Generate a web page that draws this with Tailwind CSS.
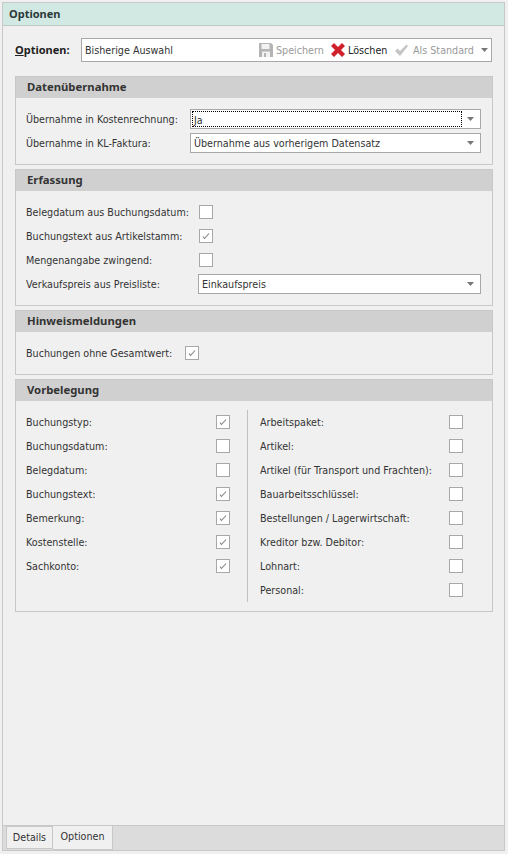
<!doctype html>
<html lang="de"><head><meta charset="utf-8"><script src="https://cdn.jsdelivr.net/npm/@tailwindcss/browser@4"></script></head>
<body class="w-[508px] h-[854px] bg-[#f0f0f0] overflow-hidden font-['DejaVu_Sans','Liberation_Sans',sans-serif] text-[9.6px] text-[#333] [&_span]:pt-[2px]">
<div class="w-[508px] h-[854px] pt-[2px] pl-[2px] pr-[3px] pb-[3px] bg-[#f0f0f0]">
<div class="h-full border border-[#c8c8c8] flex flex-col">
  <div class="h-[23px] bg-[#d2e8e2] border-b border-[#c0c8c6] flex items-center pl-[6px] font-bold text-[11px] text-[#2a3a3a] font-['Noto_Sans']">Optionen</div>
  <div class="flex-1 pl-[12px] pr-[11px] flex flex-col">
    <div class="flex items-center mt-[12px] h-[24px] pr-[1px]">
      <label class="w-[66px] font-bold text-[11px] text-[#222] font-['Noto_Sans']"><u>O</u>ptionen:</label>
      <div class="flex-1 h-[24px] bg-white border border-[#a8a8a8] flex items-center pl-[3px] pr-[3px] whitespace-nowrap">
        <span class="flex-1">Bisherige Auswahl</span>
        <svg class="w-[14px] h-[14px] mr-[3px]" viewBox="0 0 14 14"><path d="M0 0h12l2 2v12H0z" fill="#b4b4b4"/><rect x="2.500" y="1" width="8" height="5" fill="#f2f2f2"/><rect x="3" y="8.500" width="8" height="5.500" fill="#f2f2f2"/><rect x="5" y="10" width="2" height="4" fill="#b4b4b4"/></svg>
        <span class="w-[48px] text-[#9a9a9a] mr-[7px]">Speichern</span>
        <svg class="w-[14px] h-[14px] mr-[3px]" viewBox="0 0 14 14"><path d="M3 0l4 4 4-4 3 3-4 4 4 4-3 3-4-4-4 4-3-3 4-4-4-4z" fill="#d0202c"/></svg>
        <span class="w-[39px] text-[#222] mr-[7px]">Löschen</span>
        <svg class="w-[15px] h-[14px] mr-[4px]" viewBox="0 0 15 14"><path d="M1 8l2.500-2.500 2.500 2.500 6.500-6.500 1.500 1.500-8 10z" fill="#c4c4c4"/></svg>
        <span class="w-[61px] text-[#9a9a9a] mr-[7px]">Als Standard</span>
        <svg class="w-[7px] h-[4px]" viewBox="0 0 7 4"><path d="M0 0h7L3.500 4z" fill="#777"/></svg>
      </div>
    </div>

    <section class="mt-[14px] border border-[#c8c8c8]">
      <h2 class="h-[21px] bg-[#d0d0d0] flex items-center pl-[11px] font-bold text-[11.3px] text-[#333] font-['Noto_Sans']">Datenübernahme</h2>
      <div class="pt-[11px] pb-[11px] pl-[10px] pr-[11px] flex flex-col gap-[4px]">
        <div class="flex items-center h-[20px]"><span class="w-[164px]">Übernahme in Kostenrechnung:</span>
          <div class="flex-1 h-[20px] bg-white border border-[#a8a8a8] flex items-center p-[1px]"><span class="flex-1 h-full border border-dotted border-black pl-[1px] leading-[14px]">Ja</span><svg class="w-[7px] h-[4px] mx-[5px]" viewBox="0 0 7 4"><path d="M0 0h7L3.500 4z" fill="#777"/></svg></div></div>
        <div class="flex items-center h-[20px]"><span class="w-[164px]">Übernahme in KL-Faktura:</span>
          <div class="flex-1 h-[20px] bg-white border border-[#a8a8a8] flex items-center pl-[3px]"><span class="flex-1">Übernahme aus vorherigem Datensatz</span><svg class="w-[7px] h-[4px] mx-[6px]" viewBox="0 0 7 4"><path d="M0 0h7L3.500 4z" fill="#777"/></svg></div></div>
      </div>
    </section>

    <section class="mt-[4px] border border-[#c8c8c8]">
      <h2 class="h-[21px] bg-[#d0d0d0] flex items-center pl-[11px] font-bold text-[11.3px] text-[#333] font-['Noto_Sans']">Erfassung</h2>
      <div class="pt-[9px] pb-[9px] pl-[10px] pr-[11px]">
        <div class="flex items-center h-[24px]"><span class="w-[173px]">Belegdatum aus Buchungsdatum:</span><i class="w-[14px] h-[14px] bg-white border border-[#a8a8a8]"></i></div>
        <div class="flex items-center h-[24px]"><span class="w-[173px]">Buchungstext aus Artikelstamm:</span><i class="w-[14px] h-[14px] bg-white border border-[#a8a8a8] flex items-center justify-center"><svg class="w-[8px] h-[8px]" viewBox="0 0 8 8"><path d="M1 4.500l1.500 2L7 1.500" fill="none" stroke="#808080" stroke-width="1.100"/></svg></i></div>
        <div class="flex items-center h-[24px]"><span class="w-[173px]">Mengenangabe zwingend:</span><i class="w-[14px] h-[14px] bg-white border border-[#a8a8a8]"></i></div>
        <div class="flex items-center h-[24px]"><span class="w-[172px]">Verkaufspreis aus Preisliste:</span>
          <div class="flex-1 h-[20px] bg-white border border-[#a8a8a8] flex items-center pl-[3px]"><span class="flex-1">Einkaufspreis</span><svg class="w-[7px] h-[4px] mx-[6px]" viewBox="0 0 7 4"><path d="M0 0h7L3.500 4z" fill="#777"/></svg></div></div>
      </div>
    </section>

    <section class="mt-[4px] border border-[#c8c8c8]">
      <h2 class="h-[21px] bg-[#d0d0d0] flex items-center pl-[11px] font-bold text-[11.3px] text-[#333] font-['Noto_Sans']">Hinweismeldungen</h2>
      <div class="pt-[9px] pb-[9px] pl-[10px]">
        <div class="flex items-center h-[24px]"><span class="w-[159px]">Buchungen ohne Gesamtwert:</span><i class="w-[14px] h-[14px] bg-white border border-[#a8a8a8] flex items-center justify-center"><svg class="w-[8px] h-[8px]" viewBox="0 0 8 8"><path d="M1 4.500l1.500 2L7 1.500" fill="none" stroke="#808080" stroke-width="1.100"/></svg></i></div>
      </div>
    </section>

    <section class="mt-[4px] border border-[#c8c8c8]">
      <h2 class="h-[21px] bg-[#d0d0d0] flex items-center pl-[11px] font-bold text-[11.3px] text-[#333] font-['Noto_Sans']">Vorbelegung</h2>
      <div class="pt-[9px] pb-[9px] pl-[10px] flex">
        <div class="w-[222px] border-r border-[#c0c0c0] pr-[17px]">
          <div class="flex items-center justify-between h-[24px]"><span>Buchungstyp:</span><i class="w-[14px] h-[14px] bg-white border border-[#a8a8a8] flex items-center justify-center"><svg class="w-[8px] h-[8px]" viewBox="0 0 8 8"><path d="M1 4.500l1.500 2L7 1.500" fill="none" stroke="#808080" stroke-width="1.100"/></svg></i></div>
          <div class="flex items-center justify-between h-[24px]"><span>Buchungsdatum:</span><i class="w-[14px] h-[14px] bg-white border border-[#a8a8a8]"></i></div>
          <div class="flex items-center justify-between h-[24px]"><span>Belegdatum:</span><i class="w-[14px] h-[14px] bg-white border border-[#a8a8a8]"></i></div>
          <div class="flex items-center justify-between h-[24px]"><span>Buchungstext:</span><i class="w-[14px] h-[14px] bg-white border border-[#a8a8a8] flex items-center justify-center"><svg class="w-[8px] h-[8px]" viewBox="0 0 8 8"><path d="M1 4.500l1.500 2L7 1.500" fill="none" stroke="#808080" stroke-width="1.100"/></svg></i></div>
          <div class="flex items-center justify-between h-[24px]"><span>Bemerkung:</span><i class="w-[14px] h-[14px] bg-white border border-[#a8a8a8] flex items-center justify-center"><svg class="w-[8px] h-[8px]" viewBox="0 0 8 8"><path d="M1 4.500l1.500 2L7 1.500" fill="none" stroke="#808080" stroke-width="1.100"/></svg></i></div>
          <div class="flex items-center justify-between h-[24px]"><span>Kostenstelle:</span><i class="w-[14px] h-[14px] bg-white border border-[#a8a8a8] flex items-center justify-center"><svg class="w-[8px] h-[8px]" viewBox="0 0 8 8"><path d="M1 4.500l1.500 2L7 1.500" fill="none" stroke="#808080" stroke-width="1.100"/></svg></i></div>
          <div class="flex items-center justify-between h-[24px]"><span>Sachkonto:</span><i class="w-[14px] h-[14px] bg-white border border-[#a8a8a8] flex items-center justify-center"><svg class="w-[8px] h-[8px]" viewBox="0 0 8 8"><path d="M1 4.500l1.500 2L7 1.500" fill="none" stroke="#808080" stroke-width="1.100"/></svg></i></div>
        </div>
        <div class="w-[215px] pl-[12px]">
          <div class="flex items-center justify-between h-[24px]"><span>Arbeitspaket:</span><i class="w-[14px] h-[14px] bg-white border border-[#a8a8a8]"></i></div>
          <div class="flex items-center justify-between h-[24px]"><span>Artikel:</span><i class="w-[14px] h-[14px] bg-white border border-[#a8a8a8]"></i></div>
          <div class="flex items-center justify-between h-[24px]"><span>Artikel (für Transport und Frachten):</span><i class="w-[14px] h-[14px] bg-white border border-[#a8a8a8]"></i></div>
          <div class="flex items-center justify-between h-[24px]"><span>Bauarbeitsschlüssel:</span><i class="w-[14px] h-[14px] bg-white border border-[#a8a8a8]"></i></div>
          <div class="flex items-center justify-between h-[24px]"><span>Bestellungen / Lagerwirtschaft:</span><i class="w-[14px] h-[14px] bg-white border border-[#a8a8a8]"></i></div>
          <div class="flex items-center justify-between h-[24px]"><span>Kreditor bzw. Debitor:</span><i class="w-[14px] h-[14px] bg-white border border-[#a8a8a8]"></i></div>
          <div class="flex items-center justify-between h-[24px]"><span>Lohnart:</span><i class="w-[14px] h-[14px] bg-white border border-[#a8a8a8]"></i></div>
          <div class="flex items-center justify-between h-[24px]"><span>Personal:</span><i class="w-[14px] h-[14px] bg-white border border-[#a8a8a8]"></i></div>
        </div>
      </div>
    </section>
  </div>
  <div class="h-[25px] bg-[#dcdcdc] border-t border-[#c8c8c8] flex items-end pl-[3px]">
    <div class="h-[23px] w-[47px] mb-[1px] pt-px bg-[#f0f0f0] border border-[#c8c8c8] flex items-center justify-center">Details</div>
    <div class="h-[24px] w-[60px] mb-[0px] bg-[#f0f0f0] border border-t-0 border-l-0 border-[#c8c8c8] flex items-center justify-center">Optionen</div>
  </div>
</div>
</div>
</body></html>
